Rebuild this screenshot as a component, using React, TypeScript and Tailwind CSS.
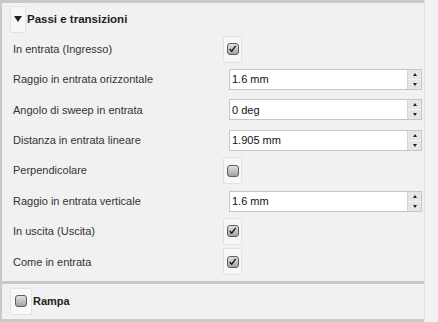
import React from "react";

type Row =
  | { kind: "check"; label: string; checked: boolean }
  | { kind: "num"; label: string; value: string };

const rows: Row[] = [
  { kind: "check", label: "In entrata (Ingresso)", checked: true },
  { kind: "num", label: "Raggio in entrata orizzontale", value: "1.6 mm" },
  { kind: "num", label: "Angolo di sweep in entrata", value: "0 deg" },
  { kind: "num", label: "Distanza in entrata lineare", value: "1.905 mm" },
  { kind: "check", label: "Perpendicolare", checked: false },
  { kind: "num", label: "Raggio in entrata verticale", value: "1.6 mm" },
  { kind: "check", label: "In uscita (Uscita)", checked: true },
  { kind: "check", label: "Come in entrata", checked: true },
];

function Checkbox({ checked }: { checked: boolean }) {
  return (
    <div className="relative w-[12px] h-[12px] rounded-[3px] border border-[#5e5e5e] bg-gradient-to-b from-[#e0e0e0] to-[#a4a4a4]">
      {checked && (
        <svg viewBox="0 0 12 12" className="absolute inset-0 w-[10px] h-[10px]">
          <path d="M2 6 L4.5 8.6 L9.2 2.2" fill="none" stroke="#111" strokeWidth="1.5" />
        </svg>
      )}
    </div>
  );
}

function Spinner() {
  return (
    <div className="flex flex-col w-[14px] h-full bg-[#e6e6e6] border-l border-[#d6d6d6]">
      <div className="flex-1 flex items-center justify-center border-b border-[#f4f4f4]">
        <div className="w-0 h-0 border-l-[2.5px] border-r-[2.5px] border-b-[3px] border-l-transparent border-r-transparent border-b-[#222]" />
      </div>
      <div className="flex-1 flex items-center justify-center">
        <div className="w-0 h-0 border-l-[2.5px] border-r-[2.5px] border-t-[3px] border-l-transparent border-r-transparent border-t-[#222]" />
      </div>
    </div>
  );
}

export default function App() {
  return (
    <div
      className="w-[438px] h-[322px] bg-[#f1f1f1] flex overflow-hidden text-[#333]"
      style={{ fontFamily: '"Liberation Sans", Arial, sans-serif' }}
    >
      <div className="w-[424px] h-full border-l-2 border-[#c9c9c9] flex flex-col">
        <div className="h-[3px] bg-[#c9c9c9] -ml-[2px]" />

        {/* section header */}
        <div className="h-[31px] flex items-center pl-[8px] pt-[2px]">
          <div className="w-[16px] h-[27px] bg-[#f7f7f7] border border-[#e2e2e2] rounded-[2px] flex items-center justify-center">
            <div className="w-0 h-0 border-l-[4px] border-r-[4px] border-t-[6px] border-l-transparent border-r-transparent border-t-[#222]" />
          </div>
          <span className="ml-[1px] text-[11.5px] font-bold text-[#222]">Passi e transizioni</span>
        </div>

        {rows.map((r, i) => (
          <div key={i} className="h-[30.4px] flex items-center pl-[11px]">
            <span className="w-[208px] text-[11px]">{r.label}</span>
            {r.kind === "check" ? (
              <div className="ml-[2px] w-[19px] h-[27px] bg-[#f7f7f7] border border-[#e2e2e2] rounded-[2px] flex items-center justify-center">
                <Checkbox checked={r.checked} />
              </div>
            ) : (
              <div className="ml-[8px] w-[193px] h-[21px] bg-white border border-[#c6c6c6] flex items-center">
                <span className="flex-1 pl-[2px] text-[11px] text-[#111]">{r.value}</span>
                <Spinner />
              </div>
            )}
          </div>
        ))}

        <div className="mt-[4px] h-[3px] bg-[#c9c9c9]" />

        {/* collapsed section */}
        <div className="h-[35px] flex items-center pl-[8px]">
          <div className="w-[22px] h-[27px] bg-[#f9f9f9] border border-[#e2e2e2] rounded-[2px] flex items-center justify-center">
            <Checkbox checked={false} />
          </div>
          <span className="ml-[1px] text-[11px] font-bold text-[#222]">Rampa</span>
        </div>

        <div className="h-[3px] bg-[#c9c9c9]" />
      </div>
      <div className="flex-1 border-l border-[#e4e4e4] bg-[#f2f2f2]" />
    </div>
  );
}
